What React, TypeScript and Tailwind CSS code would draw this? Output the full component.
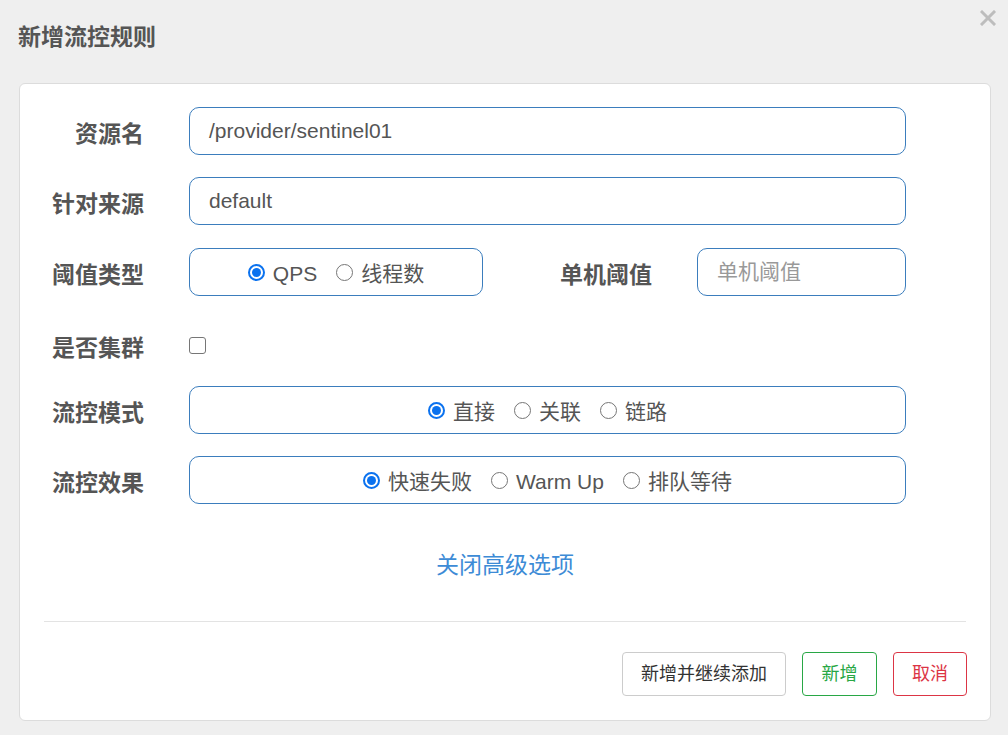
import React, { useState } from 'react';

const FONT = "font-['Liberation_Sans','Noto_Sans_CJK_SC',sans-serif]";

function Radio({ checked, label, onClick }: { checked: boolean; label: string; onClick: () => void }) {
  return (
    <label onClick={onClick} className="flex items-center gap-2 cursor-pointer">
      {checked ? (
        <span className="w-[17px] h-[17px] rounded-full border-2 border-[#0b72ef] flex items-center justify-center">
          <span className="w-[9px] h-[9px] rounded-full bg-[#0b72ef]" />
        </span>
      ) : (
        <span className="w-[17px] h-[17px] rounded-full border-[1.5px] border-[#767676] bg-white" />
      )}
      <span className="text-[21px] text-[#555] leading-none pt-[3px]">{label}</span>
    </label>
  );
}

function Label({ children }: { children: React.ReactNode }) {
  return (
    <div className="w-[100px] shrink-0 text-right text-[23px] font-bold text-[#555] leading-none pt-[6px]">{children}</div>
  );
}

const boxCls = 'h-12 rounded-[10px] border border-[#3b7dbd] bg-white';

export default function App() {
  const [grade, setGrade] = useState(0);
  const [strategy, setStrategy] = useState(0);
  const [behavior, setBehavior] = useState(0);
  const [cluster, setCluster] = useState(false);

  return (
    <div className={`w-[1008px] h-[735px] bg-[#efefef] relative ${FONT}`}>
      <div className="h-[83px] flex items-start pl-[18px] pt-[21px]">
        <h2 className="text-[23px] font-bold text-[#555] leading-[32px]">新增流控规则</h2>
      </div>
      <button className="absolute right-[12px] top-[10px] w-4 h-4">
        <svg viewBox="0 0 16 16" width="16" height="16">
          <path d="M2 2 L14 14 M14 2 L2 14" stroke="#bdbdbd" strokeWidth="3" strokeLinecap="square" />
        </svg>
      </button>

      <div className="mx-[19px] w-[972px] h-[638px] bg-white rounded-[6px] border border-[#dcdcdc] px-6 pt-[23px] pb-6 flex flex-col">
        <div className="flex flex-col gap-[22px] pr-[60px]">
          <div className="flex items-center gap-[45px]">
            <Label>资源名</Label>
            <div className={`${boxCls} flex-1 flex items-center px-[19px] text-[21px] text-[#555]`}>/provider/sentinel01</div>
          </div>
          <div className="flex items-center gap-[45px]">
            <Label>针对来源</Label>
            <div className={`${boxCls} flex-1 flex items-center px-[19px] text-[21px] text-[#555]`}>default</div>
          </div>
          <div className="flex items-center gap-[45px] mt-px">
            <Label>阈值类型</Label>
            <div className={`${boxCls} w-[294px] flex items-center justify-center gap-[19px]`}>
              <Radio checked={grade === 0} label="QPS" onClick={() => setGrade(0)} />
              <Radio checked={grade === 1} label="线程数" onClick={() => setGrade(1)} />
            </div>
            <div className="w-[124px] text-right text-[23px] font-bold text-[#555] leading-none pt-[6px]">单机阈值</div>
            <div className={`${boxCls} flex-1 flex items-center px-[19px] text-[21px] text-[#999]`}>单机阈值</div>
          </div>
          <div className="flex items-center gap-[45px] h-[46px] pt-[8px]">
            <Label>是否集群</Label>
            <span
              onClick={() => setCluster(!cluster)}
              className={`w-[17px] h-[17px] rounded-[3px] border-[1.5px] border-[#767676] ${cluster ? 'bg-[#0b72ef]' : 'bg-white'}`}
            />
          </div>
          <div className="flex items-center gap-[45px]">
            <Label>流控模式</Label>
            <div className={`${boxCls} flex-1 flex items-center justify-center gap-[19px]`}>
              <Radio checked={strategy === 0} label="直接" onClick={() => setStrategy(0)} />
              <Radio checked={strategy === 1} label="关联" onClick={() => setStrategy(1)} />
              <Radio checked={strategy === 2} label="链路" onClick={() => setStrategy(2)} />
            </div>
          </div>
          <div className="flex items-center gap-[45px]">
            <Label>流控效果</Label>
            <div className={`${boxCls} flex-1 flex items-center justify-center gap-[19px]`}>
              <Radio checked={behavior === 0} label="快速失败" onClick={() => setBehavior(0)} />
              <Radio checked={behavior === 1} label="Warm Up" onClick={() => setBehavior(1)} />
              <Radio checked={behavior === 2} label="排队等待" onClick={() => setBehavior(2)} />
            </div>
          </div>
        </div>

        <div className="mt-[46px] h-[34px] flex items-center justify-center">
          <a className="text-[23px] text-[#3d8bd6] cursor-pointer leading-none">关闭高级选项</a>
        </div>

        <div className="mt-[40px] border-t border-[#e3e3e3]" />

        <div className="mt-[30px] -mr-px flex justify-end gap-[16px]">
          <button className="h-[44px] w-[164px] rounded-[4px] border border-[#cccccc] bg-white text-[18px] text-[#333]">新增并继续添加</button>
          <button className="h-[44px] w-[75px] rounded-[4px] border border-[#28a745] bg-white text-[18px] text-[#28a745]">新增</button>
          <button className="h-[44px] w-[74px] rounded-[4px] border border-[#dc3545] bg-white text-[18px] text-[#dc3545]">取消</button>
        </div>
      </div>
    </div>
  );
}
